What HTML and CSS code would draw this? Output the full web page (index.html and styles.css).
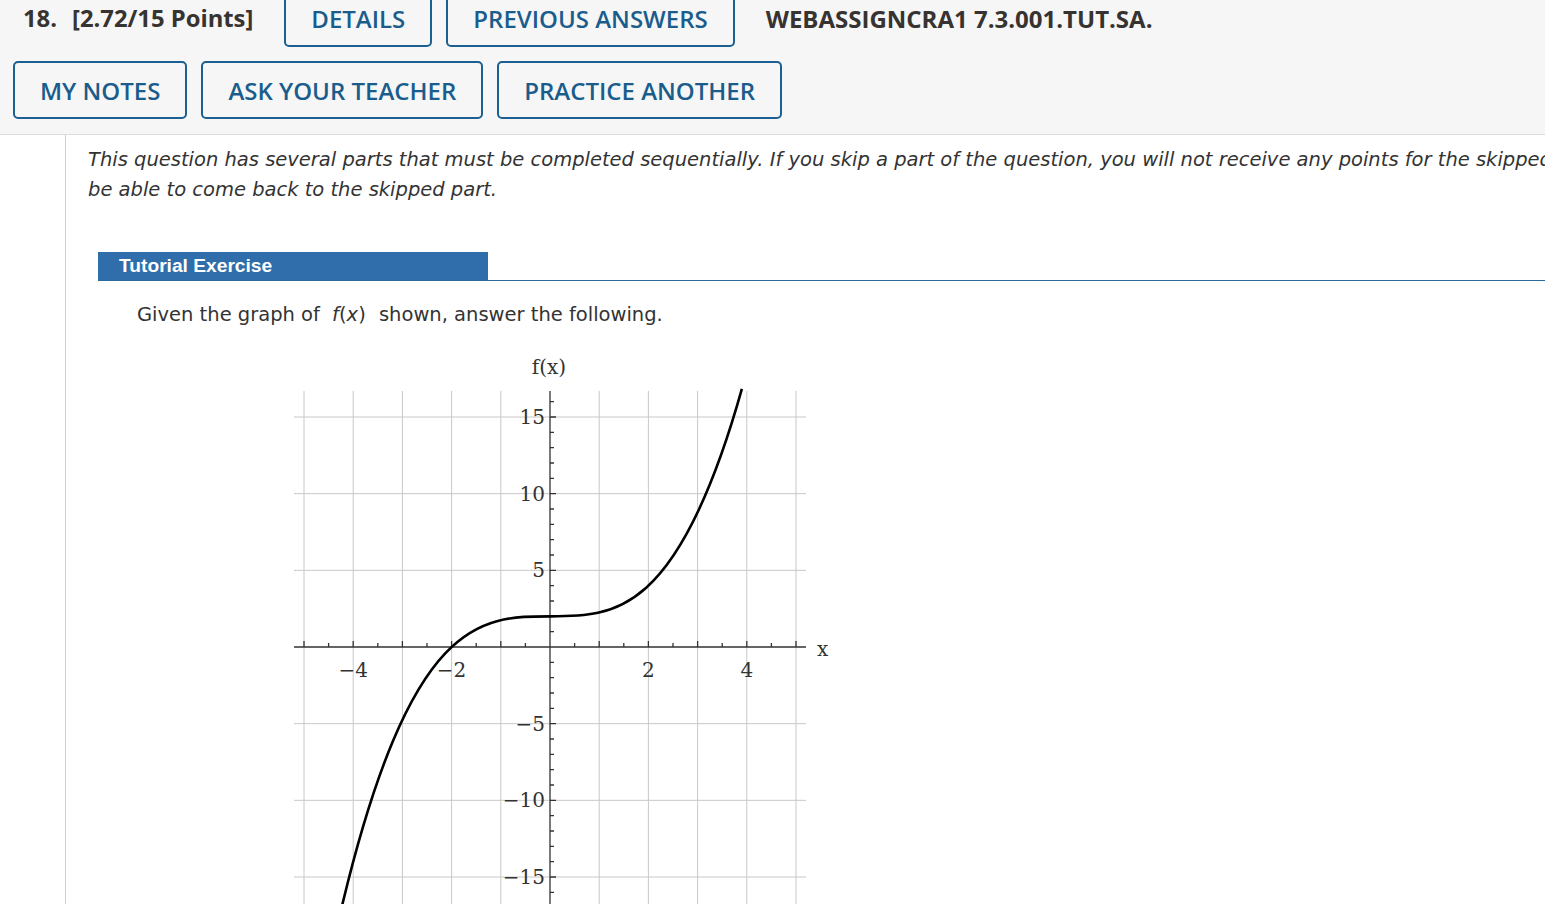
FILE: index.html
```html
<!DOCTYPE html>
<html lang="en">
<head>
<meta charset="utf-8">
<title>Question 18</title>
<link rel="stylesheet" href="styles.css">
</head>
<body>
<div class="header">
  <div class="row row-top">
    <span class="qnum">18.</span>
    <span class="points">[2.72/15 Points]</span>
    <button class="btn btn-top">DETAILS</button>
    <button class="btn btn-top">PREVIOUS ANSWERS</button>
    <span class="qid">WEBASSIGNCRA1 7.3.001.TUT.SA.</span>
  </div>
  <div class="row row-bottom">
    <button class="btn">MY NOTES</button>
    <button class="btn">ASK YOUR TEACHER</button>
    <button class="btn">PRACTICE ANOTHER</button>
  </div>
</div>
<div class="main">
  <div class="gutter"></div>
  <div class="content">
    <p class="intro">This question has several parts that must be completed sequentially. If you skip a part of the question, you will not receive any points for the skipped part, and you will not<br>be able to come back to the skipped part.</p>
    <div class="tutorial">
      <div class="tut-head"><span class="tut-title">Tutorial Exercise</span></div>
      <p class="given">Given the graph of <span class="math"><i>f</i>(<i>x</i>)</span> shown, answer the following.</p>
      <svg class="graph" width="560" height="554" viewBox="0 0 560 554" xmlns="http://www.w3.org/2000/svg">
        <g stroke="#c8c8c8" stroke-width="1" fill="none">
          <path d="M24 41V554M73.2 41V554M122.4 41V554M171.6 41V554M220.8 41V554M319.2 41V554M368.4 41V554M417.6 41V554M466.8 41V554M516 41V554"/>
          <path d="M14 67H526M14 143.67H526M14 220.33H526M14 373.67H526M14 450.33H526M14 527H526"/>
        </g>
        <g stroke="#333" stroke-width="1.3" fill="none">
          <path d="M14 297H526M270 41V554"/>
          <path d="M24 297v-6M48.6 297v-4M73.2 297v-6M97.8 297v-4M122.4 297v-6M147 297v-4M171.6 297v-6M196.2 297v-4M220.8 297v-6M245.4 297v-4M294.6 297v-4M319.2 297v-6M343.8 297v-4M368.4 297v-6M393 297v-4M417.6 297v-6M442.2 297v-4M466.8 297v-6M491.4 297v-4M516 297v-6"/>
          <path d="M270 51.67h4M270 67h6M270 82.33h4M270 97.67h4M270 113h4M270 128.33h4M270 143.67h6M270 159h4M270 174.33h4M270 189.67h4M270 205h4M270 220.33h6M270 235.67h4M270 251h4M270 266.33h4M270 281.67h4M270 312.33h4M270 327.67h4M270 343h4M270 358.33h4M270 373.67h6M270 389h4M270 404.33h4M270 419.67h4M270 435h4M270 450.33h6M270 465.67h4M270 481h4M270 496.33h4M270 511.67h4M270 527h6M270 542.33h4"/>
        </g>
        <path d="M60.9 560.6C194.56 -3.7 328.22 514.13 461.88 38.95" stroke="#000" stroke-width="2.6" fill="none"/>
        <g class="lbl" text-anchor="end">
          <text x="265" y="74">15</text>
          <text x="265" y="150.7">10</text>
          <text x="265" y="227.3">5</text>
          <text x="265" y="380.7">−5</text>
          <text x="265" y="457.3">−10</text>
          <text x="265" y="534">−15</text>
        </g>
        <g class="lbl" text-anchor="middle">
          <text x="73.2" y="327">−4</text>
          <text x="171.6" y="327">−2</text>
          <text x="368.4" y="327">2</text>
          <text x="466.8" y="327">4</text>
          <text x="269" y="24">f(x)</text>
        </g>
        <text class="lbl" x="537" y="306">x</text>
      </svg>
    </div>
  </div>
</div>
</body>
</html>
```

FILE: styles.css
```css
html {
  overflow: hidden;
}
body {
  margin: 0;
  background: #fff;
  color: #333;
}
.header {
  background: #f6f6f6;
  border-bottom: 1px solid #dcdcdc;
  margin-top: -12px;
  padding: 0 0 15px 13px;
}
.row {
  display: flex;
  align-items: center;
  gap: 14px;
}
.row-top {
  height: 58px;
  padding-top: 1px;
}
.row-bottom {
  margin-top: 14px;
}
.qnum,
.points,
.qid {
  font-family: "Open Sans", sans-serif;
  font-weight: 700;
  font-size: 23.8px;
  color: #363330;
  white-space: nowrap;
}
.qnum {
  margin-left: 10px;
  margin-right: 1px;
}
.points {
  margin-right: 17px;
}
.qid {
  margin-left: 17px;
  font-size: 24px;
}
.btn {
  height: 58px;
  box-sizing: border-box;
  padding: 0 25px;
  border: 2px solid #1c6091;
  border-radius: 5px;
  background: transparent;
  font-family: "Open Sans", sans-serif;
  font-size: 24px;
  font-weight: 600;
  color: #1a5d8c;
  white-space: nowrap;
}
.main {
  display: flex;
}
.gutter {
  width: 65px;
  flex: none;
  border-right: 1px solid #cfcfcf;
}
.content {
  width: 1700px;
  flex: none;
  padding: 10px 0 0 22px;
}
.intro {
  margin: 0;
  font-family: "DejaVu Sans", Verdana, sans-serif;
  font-style: italic;
  font-size: 19.5px;
  line-height: 30px;
  white-space: nowrap;
  color: #333;
}
.tutorial {
  margin: 47px 0 0 10px;
}
.tut-head {
  display: flex;
  border-bottom: 1px solid #2d6a99;
}
.tut-title {
  width: 390px;
  height: 28px;
  box-sizing: border-box;
  padding-left: 21px;
  background: #2f6eaa;
  color: #fff;
  font-family: "Liberation Sans", Arial, sans-serif;
  font-weight: 700;
  font-size: 19.2px;
  line-height: 28px;
}
.given {
  margin: 19px 0 0 39px;
  font-family: "DejaVu Sans", Verdana, sans-serif;
  font-size: 19.5px;
  line-height: 30px;
  color: #333;
}
.math {
  margin: 0 7px 0 6px;
}
.graph {
  display: block;
  margin: 20px 0 0 182px;
}
.lbl {
  font-family: "DejaVu Serif", serif;
  font-size: 20px;
  fill: #333;
}
```
